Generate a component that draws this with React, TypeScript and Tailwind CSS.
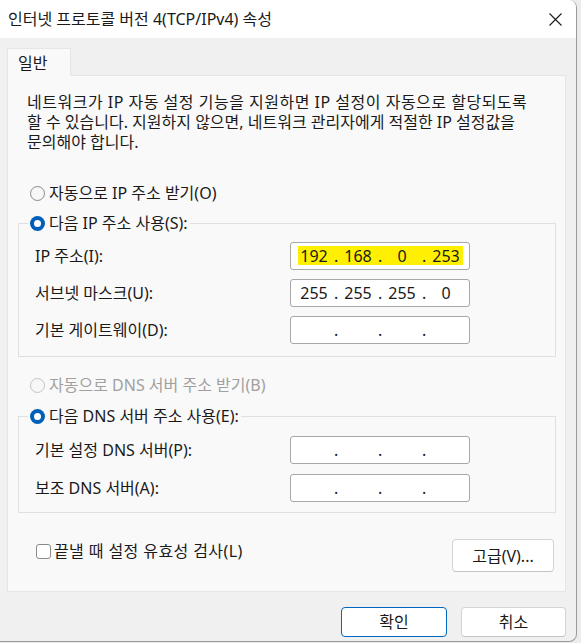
import React from "react";

const FONT = "font-['Noto_Sans','Noto_Sans_CJK_KR',sans-serif]";

function Radio({ checked, disabled }: { checked?: boolean; disabled?: boolean }) {
  if (checked) {
    return (
      <span className="flex h-[15px] w-[15px] shrink-0 items-center justify-center rounded-full bg-[#005fb8]">
        <span className="h-[7px] w-[7px] rounded-full bg-white" />
      </span>
    );
  }
  return (
    <span
      className={`h-[15px] w-[15px] shrink-0 rounded-full border bg-[#f7f7f7] ${
        disabled ? "border-[#c4c4c4]" : "border-[#8a8a8a]"
      }`}
    />
  );
}

function IpField({ parts, highlight }: { parts: string[]; highlight?: boolean }) {
  return (
    <div className="relative h-[28px] w-[180px] shrink-0 rounded-[3px] border border-[#a8a8a8] bg-white">
      {highlight && <div className="absolute left-[7px] top-[3px] h-[19px] w-[165px] bg-[#ffef00]" />}
      <div className="relative flex h-full items-center pl-[3px] text-[16px] leading-none text-[#1a1a1a]">
        {parts.map((p, i) => (
          <React.Fragment key={i}>
            <span className="w-[40px] text-center">{p}</span>
            {i < 3 && <span className="w-[4px] text-center">.</span>}
          </React.Fragment>
        ))}
      </div>
    </div>
  );
}

function Row({ label, parts, highlight }: { label: string; parts: string[]; highlight?: boolean }) {
  return (
    <div className="flex items-center">
      <span className="w-[271px] pl-[16px] text-[16px] text-[#1a1a1a]">{label}</span>
      <IpField parts={parts} highlight={highlight} />
    </div>
  );
}

function Group({ legend, children }: { legend: string; children: React.ReactNode }) {
  return (
    <fieldset className="ml-[10px] w-[538px] border border-[#e0e0e0]">
      <legend className="ml-[9px] flex h-[20px] items-center gap-[4px] px-[2px] text-[16px] text-[#1a1a1a]">
        <Radio checked />
        <span>{legend}</span>
      </legend>
      {children}
    </fieldset>
  );
}

export default function App() {
  const empty = ["", "", "", ""];
  return (
    <div className={`h-[643px] w-[581px] overflow-hidden bg-[#ececec] ${FONT}`}>
      <div className="flex h-[642px] w-[577px] flex-col overflow-hidden rounded-r-[8px] border-r border-b border-[#9a9a9a] bg-[#f0f0f0]">
        {/* title bar */}
        <div className="flex h-[38px] shrink-0 items-center justify-between bg-white pl-[8px] pr-[14px]">
          <span className="text-[16px] text-[#1a1a1a]">인터넷 프로토콜 버전 4(TCP/IPv4) 속성</span>
          <svg width="13" height="13" viewBox="0 0 13 13" className="text-[#1a1a1a]">
            <path d="M0.5 0.5 L12.5 12.5 M12.5 0.5 L0.5 12.5" stroke="currentColor" strokeWidth="1.1" fill="none" />
          </svg>
        </div>

        <div className="flex flex-col pl-[7px] pt-[10px]">
          {/* tab */}
          <div className="relative z-10 -mb-px flex h-[28px] w-[64px] items-center border-x border-t border-[#e5e5e5] bg-[#f9f9f9] pl-[10px] text-[16px] text-[#1a1a1a]">
            일반
          </div>

          {/* panel */}
          <div className="flex h-[517px] w-[559px] flex-col border border-[#e5e5e5] bg-[#f9f9f9]">
            <p className="pl-[19px] pt-[16px] text-[16px] leading-[20px] text-[#1a1a1a]">
              <span className="tracking-[0.5px]">네트워크가 IP 자동 설정 기능을 지원하면 IP 설정이 자동으로 할당되도록</span>
              <br />할 수 있습니다. 지원하지 않으면, 네트워크 관리자에게 적절한 IP 설정값을
              <br />문의해야 합니다.
            </p>

            <div className="ml-[22px] mt-[31px] flex h-[20px] items-center gap-[4px] text-[16px] text-[#1a1a1a]">
              <Radio />
              <span>자동으로 IP 주소 받기(O)</span>
            </div>

            <div className="mt-[10px]">
              <Group legend="다음 IP 주소 사용(S):">
                <div className="mt-[9px] flex flex-col gap-[9px] pb-[12px]">
                  <Row label="IP 주소(I):" parts={["192", "168", "0", "253"]} highlight />
                  <Row label="서브넷 마스크(U):" parts={["255", "255", "255", "0"]} />
                  <Row label="기본 게이트웨이(D):" parts={empty} />
                </div>
              </Group>
            </div>

            <div className="ml-[22px] mt-[18px] flex h-[20px] items-center gap-[4px] text-[16px] text-[#a0a0a0]">
              <Radio disabled />
              <span>자동으로 DNS 서버 주소 받기(B)</span>
            </div>

            <div className="mt-[11px]">
              <Group legend="다음 DNS 서버 주소 사용(E):">
                <div className="mt-[10px] flex flex-col gap-[10px] pb-[10px]">
                  <Row label="기본 설정 DNS 서버(P):" parts={empty} />
                  <Row label="보조 DNS 서버(A):" parts={empty} />
                </div>
              </Group>
            </div>

            <div className="mt-[26px] flex items-start justify-between pl-[28px] pr-[11px]">
              <div className="mt-[2px] flex h-[20px] items-center gap-[3px] text-[16px] text-[#1a1a1a]">
                <span className="h-[15px] w-[15px] rounded-[3px] border border-[#8a8a8a] bg-white" />
                <span className="tracking-[0.4px]">끝낼 때 설정 유효성 검사(L)</span>
              </div>
              <button className="h-[33px] w-[102px] rounded-[4px] border border-[#d4d4d4] border-b-[#c4c4c4] bg-white text-[16px] text-[#1a1a1a]">
                고급(V)...
              </button>
            </div>
          </div>

          {/* footer */}
          <div className="mt-[15px] flex justify-end gap-[14px] pr-[10px]">
            <button className="h-[30px] w-[106px] rounded-[4px] border border-[#0067c0] bg-white text-[16px] text-[#1a1a1a]">
              확인
            </button>
            <button className="h-[30px] w-[105px] rounded-[4px] border border-[#d4d4d4] border-b-[#c4c4c4] bg-white text-[16px] text-[#1a1a1a]">
              취소
            </button>
          </div>
        </div>
      </div>
    </div>
  );
}
